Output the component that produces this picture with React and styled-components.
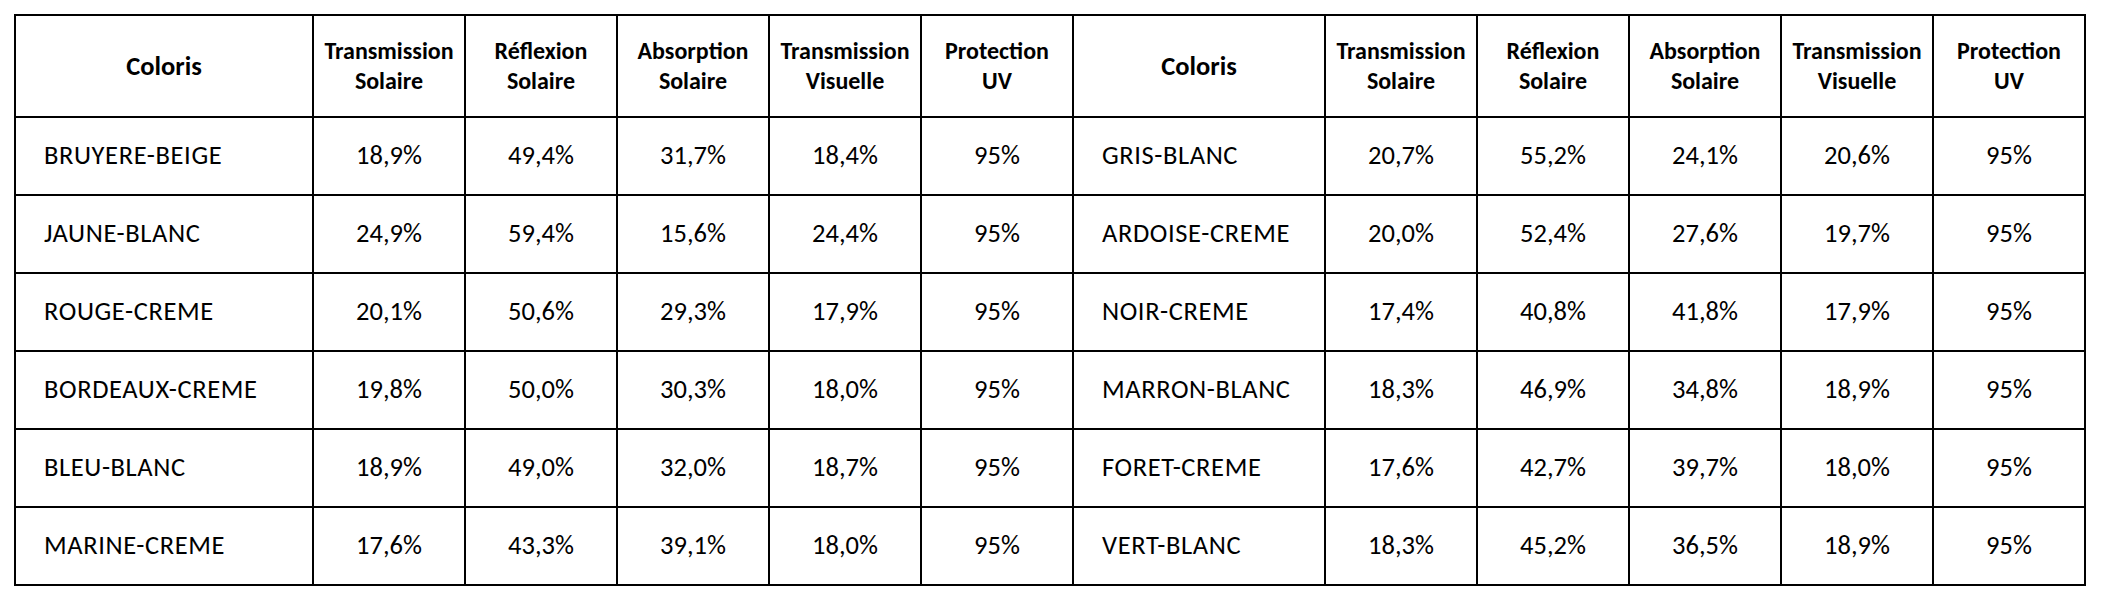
import React from "react"
import styled, {createGlobalStyle} from "styled-components"

const GlobalStyle = createGlobalStyle`
  html, body {
    margin: 0;
    padding: 0;
    background: #ffffff;
  }
  body {
    font-family: Carlito, Lato, "Liberation Sans", sans-serif;
    color: #000000;
  }
`

const Page = styled.div`
  padding: 14px 0 0 14px;
`

const Table = styled.table`
  table-layout: fixed;
  width: 2072px;
  border-collapse: separate;
  border-spacing: 0;
  border-top: 2px solid #000;
  border-left: 2px solid #000;
`

const HeadCell = styled.th`
  box-sizing: border-box;
  width: ${p => p.$wide ? "252px" : p.$first ? "298px" : "152px"};
  height: 102px;
  padding: 0;
  border-right: 2px solid #000;
  border-bottom: 2px solid #000;
  text-align: center;
  vertical-align: middle;
  font-weight: 700;
  font-size: ${p => p.$big ? "26.5px" : "24px"};
  line-height: 30px;
  color: #000;
  white-space: nowrap;
`

const Cell = styled.td`
  box-sizing: border-box;
  height: 78px;
  padding: ${p => p.$name ? "0 0 2px 28px" : "0 0 2px 0"};
  border-right: 2px solid #000;
  border-bottom: 2px solid #000;
  text-align: ${p => p.$name ? "left" : "center"};
  vertical-align: middle;
  font-size: 26.5px;
  letter-spacing: ${p => p.$name ? "0.6px" : "0"};
  white-space: nowrap;
  color: #000;
`

const headers = [
  ["Transmission", "Solaire"],
  ["Réflexion", "Solaire"],
  ["Absorption", "Solaire"],
  ["Transmission", "Visuelle"],
  ["Protection", "UV"],
]

const rows = [
  [["BRUYERE-BEIGE", "18,9%", "49,4%", "31,7%", "18,4%", "95%"], ["GRIS-BLANC", "20,7%", "55,2%", "24,1%", "20,6%", "95%"]],
  [["JAUNE-BLANC", "24,9%", "59,4%", "15,6%", "24,4%", "95%"], ["ARDOISE-CREME", "20,0%", "52,4%", "27,6%", "19,7%", "95%"]],
  [["ROUGE-CREME", "20,1%", "50,6%", "29,3%", "17,9%", "95%"], ["NOIR-CREME", "17,4%", "40,8%", "41,8%", "17,9%", "95%"]],
  [["BORDEAUX-CREME", "19,8%", "50,0%", "30,3%", "18,0%", "95%"], ["MARRON-BLANC", "18,3%", "46,9%", "34,8%", "18,9%", "95%"]],
  [["BLEU-BLANC", "18,9%", "49,0%", "32,0%", "18,7%", "95%"], ["FORET-CREME", "17,6%", "42,7%", "39,7%", "18,0%", "95%"]],
  [["MARINE-CREME", "17,6%", "43,3%", "39,1%", "18,0%", "95%"], ["VERT-BLANC", "18,3%", "45,2%", "36,5%", "18,9%", "95%"]],
]

function HeaderGroup({first}) {
  return (
    <>
      <HeadCell $first={first} $wide={!first} $big>Coloris</HeadCell>
      {headers.map((h, i) => (
        <HeadCell key={i}>
          {h[0]}<br/>{h[1]}
        </HeadCell>
      ))}
    </>
  )
}

function Group({values}) {
  return (
    <>
      {values.map((v, i) => (
        <Cell key={i} $name={i === 0}>{v}</Cell>
      ))}
    </>
  )
}

export default function App() {
  return (
    <Page>
      <GlobalStyle/>
      <Table>
        <thead>
          <tr>
            <HeaderGroup first/>
            <HeaderGroup/>
          </tr>
        </thead>
        <tbody>
          {rows.map((r, i) => (
            <tr key={i}>
              <Group values={r[0]}/>
              <Group values={r[1]}/>
            </tr>
          ))}
        </tbody>
      </Table>
    </Page>
  )
}
